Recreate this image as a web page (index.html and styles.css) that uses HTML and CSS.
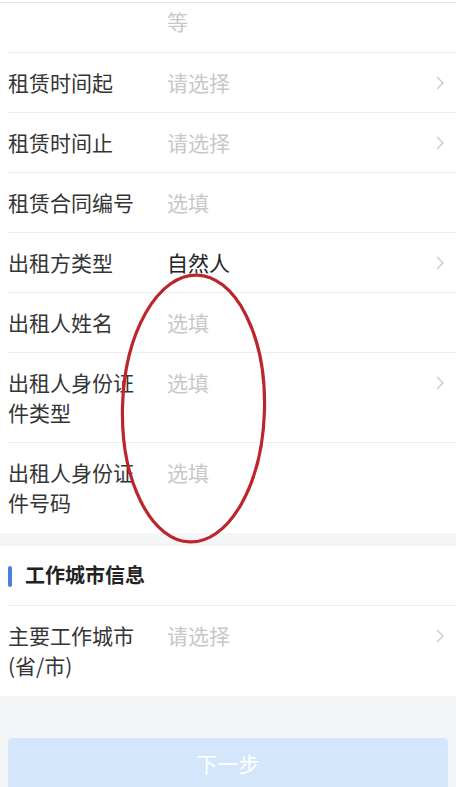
FILE: index.html
```html
<!DOCTYPE html>
<html lang="zh-CN">
<head>
<meta charset="utf-8">
<title>租赁信息</title>
<link rel="stylesheet" href="styles.css">
</head>
<body>
<div class="page">
  <section class="card card-top">
    <div class="rule"></div>
    <div class="row row-tail">
      <span class="label"></span>
      <span class="value ph">等</span>
    </div>
    <div class="row">
      <span class="label">租赁时间起</span>
      <span class="value ph">请选择</span>
      <svg class="chev" viewBox="0 0 9 14"><path d="M1.5 1.5 L7 7 L1.5 12.5"/></svg>
    </div>
    <div class="row">
      <span class="label">租赁时间止</span>
      <span class="value ph">请选择</span>
      <svg class="chev" viewBox="0 0 9 14"><path d="M1.5 1.5 L7 7 L1.5 12.5"/></svg>
    </div>
    <div class="row">
      <span class="label">租赁合同编号</span>
      <span class="value ph">选填</span>
    </div>
    <div class="row">
      <span class="label">出租方类型</span>
      <span class="value">自然人</span>
      <svg class="chev" viewBox="0 0 9 14"><path d="M1.5 1.5 L7 7 L1.5 12.5"/></svg>
    </div>
    <div class="row">
      <span class="label">出租人姓名</span>
      <span class="value ph">选填</span>
    </div>
    <div class="row">
      <span class="label">出租人身份证件类型</span>
      <span class="value ph">选填</span>
      <svg class="chev" viewBox="0 0 9 14"><path d="M1.5 1.5 L7 7 L1.5 12.5"/></svg>
    </div>
    <div class="row row-last">
      <span class="label">出租人身份证件号码</span>
      <span class="value ph">选填</span>
    </div>
  </section>

  <section class="card">
    <div class="section-head"><i class="bar"></i>工作城市信息</div>
    <div class="row row-last">
      <span class="label">主要工作城市(省/市)</span>
      <span class="value ph">请选择</span>
      <svg class="chev" viewBox="0 0 9 14"><path d="M1.5 1.5 L7 7 L1.5 12.5"/></svg>
    </div>
  </section>

  <div class="footer">
    <button class="next" type="button">下一步</button>
  </div>

  <svg class="annotation" width="456" height="787" viewBox="0 0 456 787">
    <ellipse cx="193.5" cy="408.5" rx="71" ry="133.5" transform="rotate(1.5 193.5 408.5)"/>
  </svg>
</div>
</body>
</html>
```

FILE: styles.css
```css
html, body {
  margin: 0;
  padding: 0;
  background: #f3f5f7;
}

body {
  font-family: "Noto Sans CJK SC", "Noto Sans", sans-serif;
  -webkit-font-smoothing: antialiased;
}

.page {
  position: relative;
  width: 456px;
  min-height: 787px;
  overflow: hidden;
}

.card {
  background: #ffffff;
}

.card-top {
  margin-bottom: 13px;
  padding-top: 2px;
}

.rule {
  height: 1px;
  background: #e2e2e2;
}

.row {
  display: flex;
  align-items: flex-start;
  margin-left: 8px;
  padding: 14px 11px 15px 0;
  border-bottom: 1px solid #eeeeee;
  font-size: 21px;
  line-height: 30px;
}

.row-tail {
  padding-top: 3px;
  padding-bottom: 16px;
}

.row-last {
  border-bottom: none;
  padding-bottom: 16px;
}

.label {
  flex: none;
  width: 144px;
  margin-right: 15px;
  color: #353535;
}

.value {
  flex: 1;
  color: #222222;
}

.value.ph {
  color: #c8c8c8;
}

.chev {
  flex: none;
  width: 9px;
  height: 14px;
  margin-top: 9px;
  fill: none;
  stroke: #c9c9c9;
  stroke-width: 1.4;
  stroke-linecap: round;
  stroke-linejoin: round;
}

.section-head {
  display: flex;
  align-items: center;
  margin-left: 8px;
  padding: 14px 0 15px;
  border-bottom: 1px solid #eeeeee;
  font-size: 20px;
  line-height: 30px;
  font-weight: 700;
  color: #222222;
}

.bar {
  display: block;
  width: 4px;
  height: 21px;
  border-radius: 2px;
  background: #4d80d4;
  margin-right: 13px;
  margin-top: 2px;
}

.footer {
  padding: 42px 8px 0;
}

.next {
  display: block;
  width: 100%;
  height: 54px;
  border: none;
  border-radius: 4px;
  background: #d4e6fb;
  color: #ffffff;
  font-family: inherit;
  font-size: 21px;
  line-height: 30px;
  padding: 10px 0 14px;
}

.annotation {
  position: absolute;
  left: 0;
  top: 0;
  pointer-events: none;
}

.annotation ellipse {
  fill: none;
  stroke: #bb262c;
  stroke-width: 3.2;
}
```
